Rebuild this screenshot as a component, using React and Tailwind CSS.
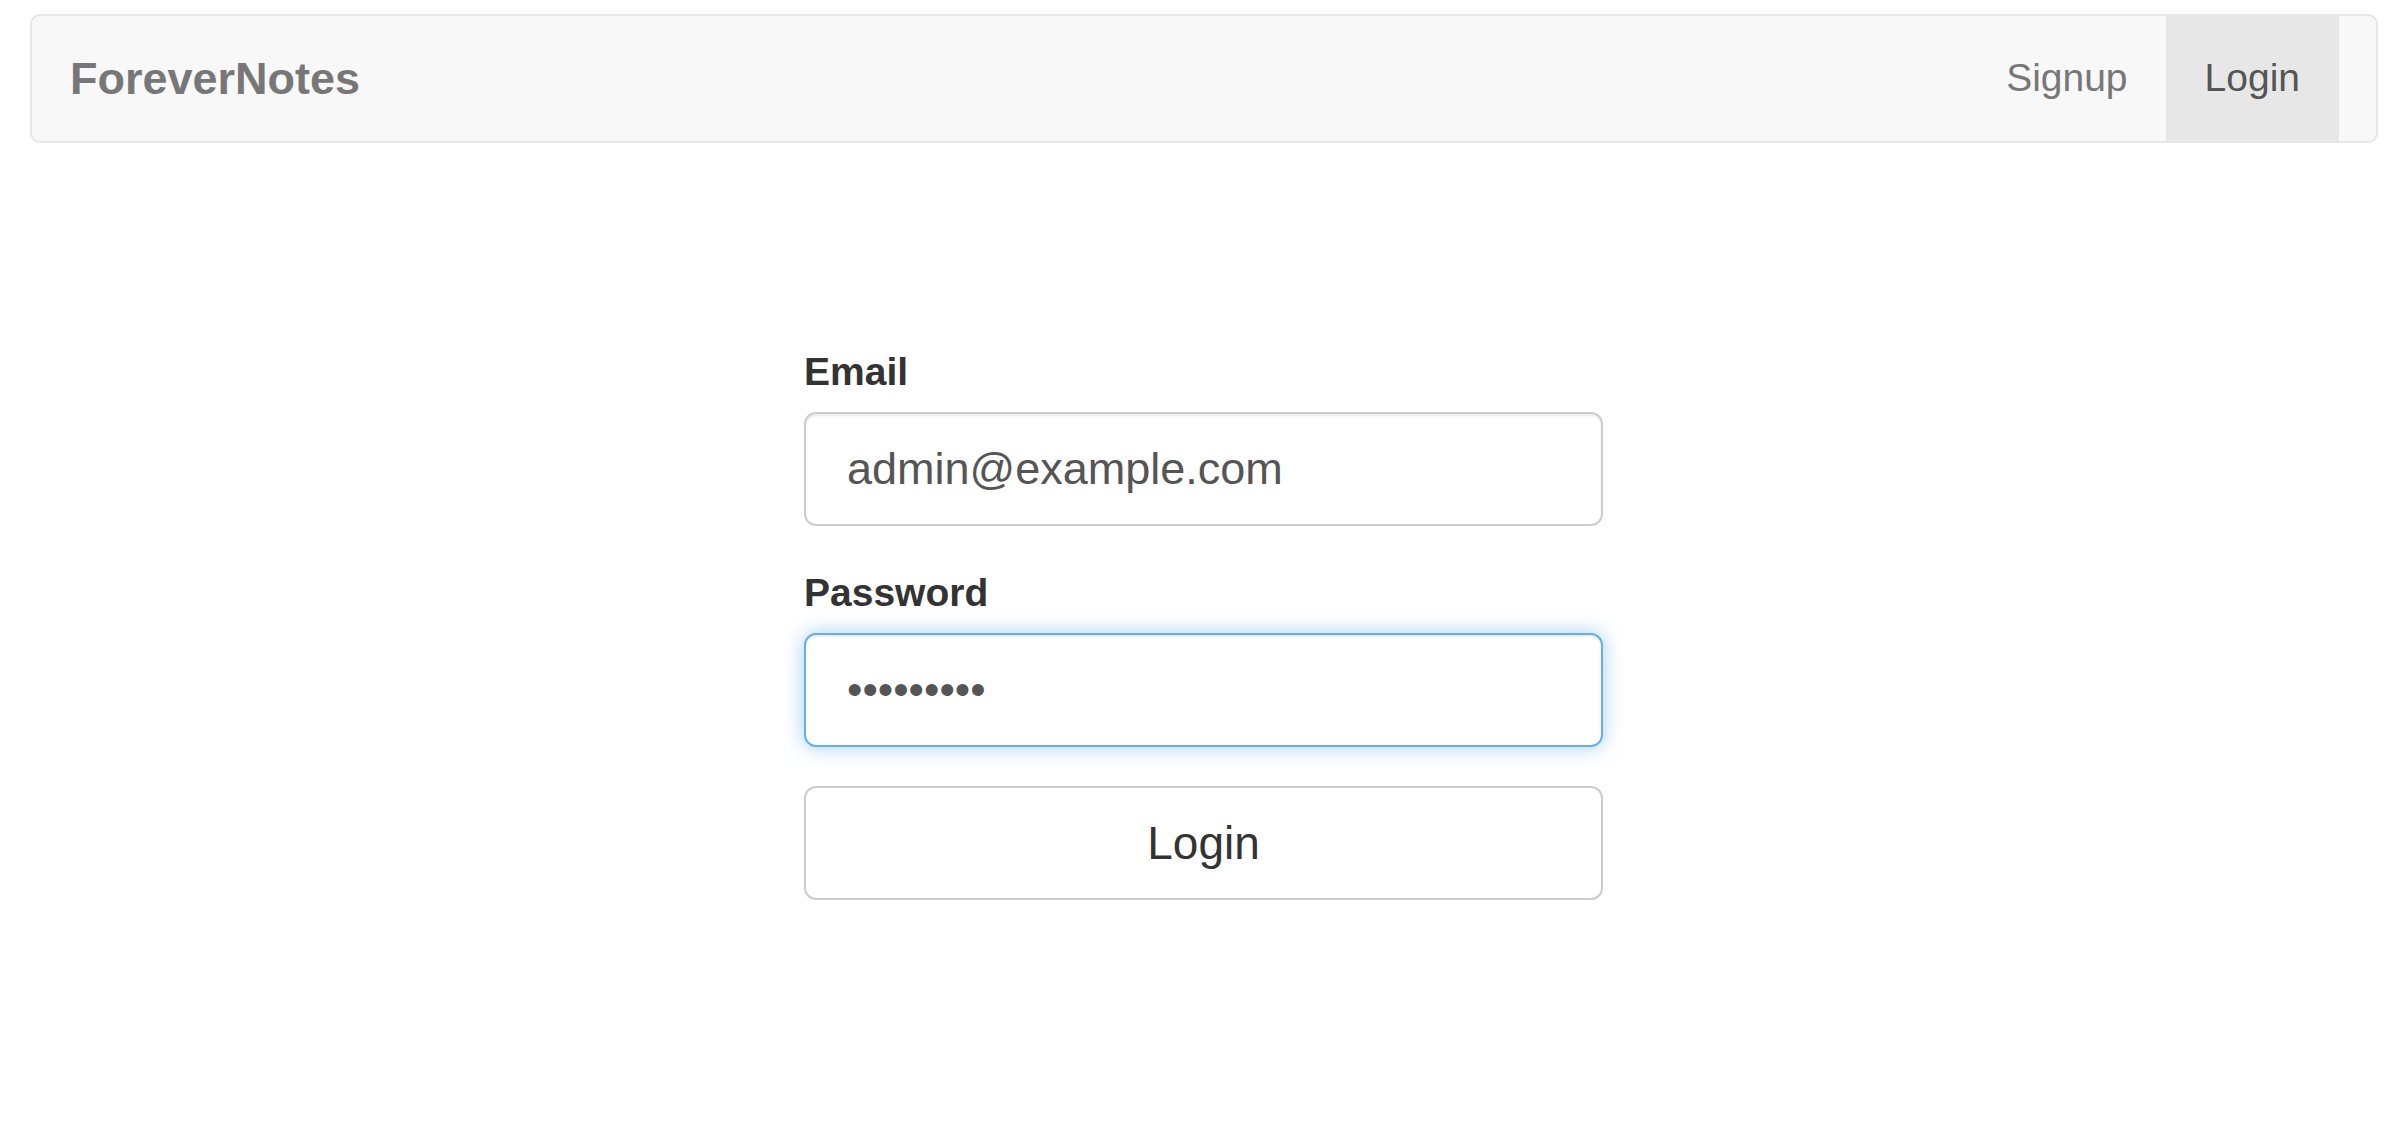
import React from 'react';

const Navbar = () => {
  return (
    <nav className="ml-[30px] mr-[14px] mt-[14px] h-[129px] flex items-stretch justify-between bg-[#f8f8f8] border-2 border-[#e7e7e7] rounded-[10px]">
      <a href="#" className="flex items-center pl-[38px] text-[45px] font-bold text-[#777]">
        ForeverNotes
      </a>
      <ul className="flex items-stretch mr-[37px]">
        <li className="flex">
          <a href="#" className="flex items-center px-[38px] text-[39px] text-[#777]">Signup</a>
        </li>
        <li className="flex">
          <a href="#" className="flex items-center px-[39px] text-[39px] text-[#555] bg-[#e7e7e7]">Login</a>
        </li>
      </ul>
    </nav>
  );
};

const LoginForm = () => {
  return (
    <form className="ml-[804px] w-[799px] mt-[201px]" onSubmit={(e) => e.preventDefault()}>
      <label className="block text-[39px] leading-[55px] font-bold text-[#333] mb-[13px]">Email</label>
      <input
        type="email"
        defaultValue="admin@example.com"
        className="block w-full h-[114px] px-[41px] text-[45px] text-[#555] bg-white border-2 border-[#ccc] rounded-[12px] shadow-[inset_0_2px_2px_rgba(0,0,0,0.075)] outline-none"
      />
      <label className="block mt-[39px] text-[39px] leading-[55px] font-bold text-[#333] mb-[13px]">Password</label>
      <input
        type="password"
        defaultValue="123456789"
        className="block w-full h-[114px] px-[41px] text-[44px] text-[#555] bg-white border-2 border-[#66afe9] rounded-[12px] shadow-[inset_0_2px_2px_rgba(0,0,0,0.075),0_0_20px_rgba(102,175,233,0.6)] outline-none"
      />
      <button
        type="submit"
        className="block w-full h-[114px] mt-[39px] text-[46px] text-[#333] bg-white border-2 border-[#ccc] rounded-[12px]"
      >
        Login
      </button>
    </form>
  );
};

export default function App() {
  return (
    <div className="min-h-screen bg-white" style={{ fontFamily: '"Liberation Sans", Arial, sans-serif' }}>
      <Navbar />
      <LoginForm />
    </div>
  );
}
